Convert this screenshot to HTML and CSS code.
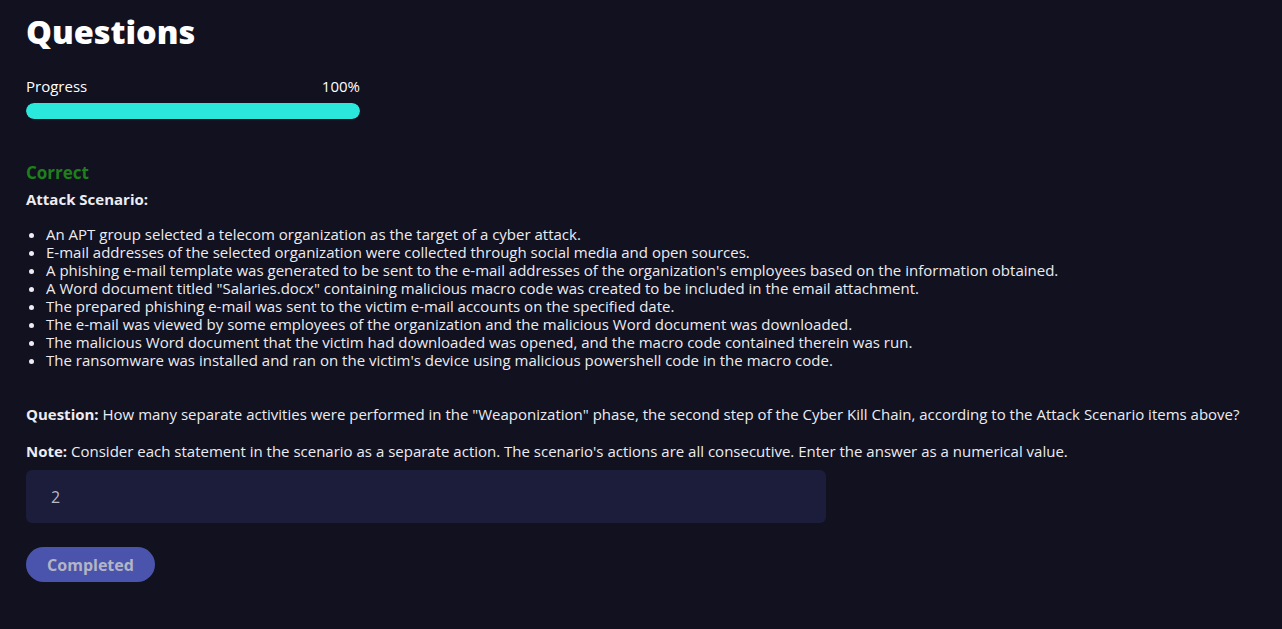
FILE: index.html
```html
<!DOCTYPE html>
<html>
<head>
<meta charset="utf-8">
<link rel="stylesheet" href="styles.css">
</head>
<body>
<main class="page">
  <h1 class="title">Questions</h1>
  <div class="progress">
    <div class="progress-head"><span>Progress</span><span>100%</span></div>
    <div class="progress-track"><div class="progress-fill" style="width:100%"></div></div>
  </div>
  <div class="status">Correct</div>
  <div class="question-body">
    <p class="scenario-title"><strong>Attack Scenario:</strong></p>
    <ul class="scenario">
      <li>An APT group selected a telecom organization as the target of a cyber attack.</li>
      <li>E-mail addresses of the selected organization were collected through social media and open sources.</li>
      <li>A phishing e-mail template was generated to be sent to the e-mail addresses of the organization's employees based on the information obtained.</li>
      <li>A Word document titled "Salaries.docx" containing malicious macro code was created to be included in the email attachment.</li>
      <li>The prepared phishing e-mail was sent to the victim e-mail accounts on the specified date.</li>
      <li>The e-mail was viewed by some employees of the organization and the malicious Word document was downloaded.</li>
      <li>The malicious Word document that the victim had downloaded was opened, and the macro code contained therein was run.</li>
      <li>The ransomware was installed and ran on the victim's device using malicious powershell code in the macro code.</li>
    </ul>
    <p class="para"><strong>Question:</strong> How many separate activities were performed in the "Weaponization" phase, the second step of the Cyber Kill Chain, according to the Attack Scenario items above?</p>
    <p class="para"><strong>Note:</strong> Consider each statement in the scenario as a separate action. The scenario's actions are all consecutive. Enter the answer as a numerical value.</p>
  </div>
  <div class="answer">2</div>
  <button class="btn">Completed</button>
</main>
</body>
</html>
```
FILE: styles.css
```css
html, body {
  margin: 0;
  padding: 0;
  background: #11111f;
  color: #ececf2;
  font-family: "Open Sans", "Liberation Sans", sans-serif;
}
.page {
  padding: 10px 26px 0 26px;
}
.title {
  margin: 0;
  font-size: 32.5px;
  font-weight: 800;
  line-height: 44px;
  color: #ffffff;
}
.progress {
  width: 334px;
  margin-top: 23px;
}
.progress-head {
  display: flex;
  justify-content: space-between;
  font-size: 15px;
  line-height: 18px;
  color: #ffffff;
}
.progress-track {
  margin-top: 8px;
  height: 16px;
  border-radius: 8px;
  background: #2a2a40;
  overflow: hidden;
}
.progress-fill {
  height: 100%;
  background: #2ae8dc;
  border-radius: 8px;
}
.status {
  margin-top: 44px;
  font-size: 17px;
  font-weight: 700;
  line-height: 20px;
  color: #1f7f1c;
}
.question-body {
  font-size: 15px;
  line-height: 18px;
}
.scenario-title {
  margin: 7px 0 0 0;
}
.scenario {
  margin: 17px 0 0 0;
  padding-left: 20px;
}
.para {
  margin: 36px 0 0 0;
}
.para + .para {
  margin-top: 19px;
}
.answer {
  margin-top: 10px;
  width: 800px;
  height: 53px;
  box-sizing: border-box;
  padding: 0 25px;
  display: flex;
  align-items: center;
  background: #1b1d3b;
  border-radius: 6px;
  font-size: 16px;
  color: #b8b8c8;
}
.btn {
  display: block;
  margin-top: 24px;
  width: 129px;
  height: 35px;
  border: none;
  border-radius: 18px;
  background: #4a54ad;
  color: #b4b4c4;
  font-family: inherit;
  font-size: 16px;
  font-weight: 700;
  padding: 0;
}
```
